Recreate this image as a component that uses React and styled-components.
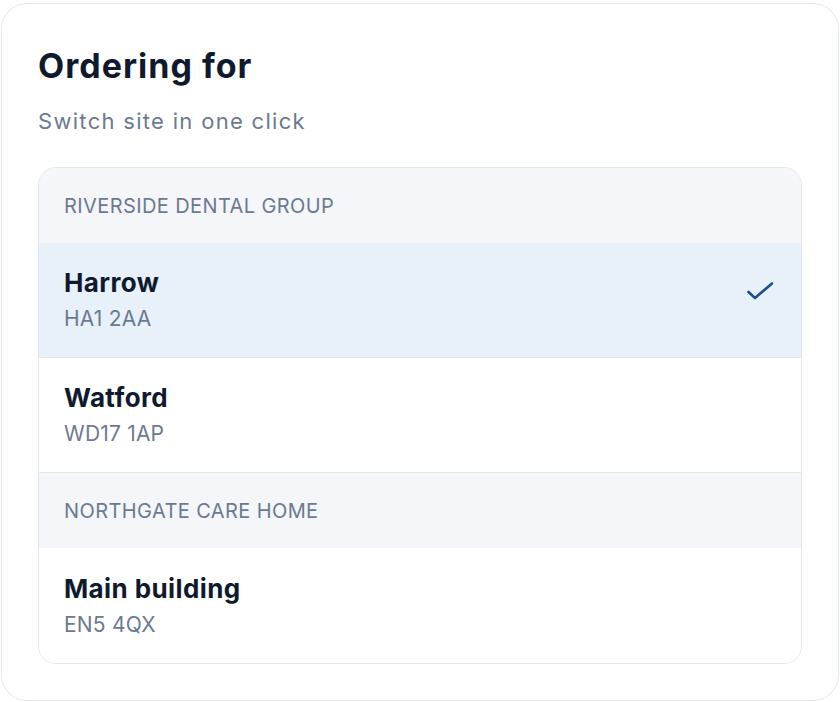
import React from 'react';
import styled, { createGlobalStyle } from 'styled-components';

const GlobalStyle = createGlobalStyle`
  html, body {
    margin: 0;
    background: #ffffff;
    font-family: Inter, "Noto Sans", sans-serif;
  }
`;

const Page = styled.div`
  padding: 3px 1px 1px 1px;
`;

const Card = styled.section`
  border: 1px solid #e3e8ef;
  border-radius: 26px;
  padding: 41px 36px 36px 36px;
  background: #ffffff;
`;

const Title = styled.h2`
  margin: 0;
  font-size: 34px;
  line-height: 42px;
  font-weight: 700;
  color: #0f1a2e;
  letter-spacing: 1px;
`;

const Subtitle = styled.p`
  margin: 19px 0 0 0;
  font-size: 22px;
  line-height: 30px;
  color: #6b7a90;
  letter-spacing: 1.3px;
`;

const List = styled.div`
  margin-top: 31px;
  border: 1px solid #e3e8ef;
  border-radius: 18px;
  overflow: hidden;
`;

const GroupLabel = styled.div`
  display: flex;
  align-items: center;
  height: 75px;
  padding: 0 25px;
  background: #f4f6fa;
  font-size: 20px;
  color: #6b7a90;
  text-transform: uppercase;
  letter-spacing: 0.4px;
`;

const Row = styled.div`
  display: flex;
  align-items: center;
  justify-content: space-between;
  height: 115px;
  padding: 0 27px 0 25px;
  box-sizing: border-box;
  background: ${p => (p.$active ? '#e8f0fa' : '#ffffff')};
  border-bottom: ${p => (p.$divided ? '1px solid #e3e8ef' : 'none')};
`;

const Info = styled.div`
  display: flex;
  flex-direction: column;
  gap: 6px;
`;

const Name = styled.span`
  font-size: 26px;
  line-height: 32px;
  font-weight: 700;
  color: #0f1a2e;
  letter-spacing: 0.4px;
`;

const Postcode = styled.span`
  font-size: 21px;
  line-height: 28px;
  color: #6b7a90;
  letter-spacing: 0.2px;
`;

const CheckMark = styled.svg`
  margin-bottom: 18px;
  flex-shrink: 0;
`;

const Check = () => (
  <CheckMark width="28" height="20" viewBox="0 0 28 20" fill="none" stroke="#1d4f8c" strokeWidth="2.6" strokeLinecap="round" strokeLinejoin="round">
    <path d="M2.5 11 9 17 26 2.5" />
  </CheckMark>
);

const groups = [
  {
    name: 'Riverside Dental Group',
    sites: [
      { name: 'Harrow', postcode: 'HA1 2AA', active: true },
      { name: 'Watford', postcode: 'WD17 1AP' },
    ],
  },
  {
    name: 'Northgate Care Home',
    sites: [{ name: 'Main building', postcode: 'EN5 4QX' }],
  },
];

const App = () => (
  <Page>
    <GlobalStyle />
    <Card>
      <Title>Ordering for</Title>
      <Subtitle>Switch site in one click</Subtitle>
      <List>
        {groups.map((g, gi) => (
          <React.Fragment key={g.name}>
            <GroupLabel>{g.name}</GroupLabel>
            {g.sites.map((s, si) => (
              <Row
                key={s.name}
                $active={s.active}
                $divided={!(gi === groups.length - 1 && si === g.sites.length - 1)}
              >
                <Info>
                  <Name>{s.name}</Name>
                  <Postcode>{s.postcode}</Postcode>
                </Info>
                {s.active && <Check />}
              </Row>
            ))}
          </React.Fragment>
        ))}
      </List>
    </Card>
  </Page>
);

export default App;
